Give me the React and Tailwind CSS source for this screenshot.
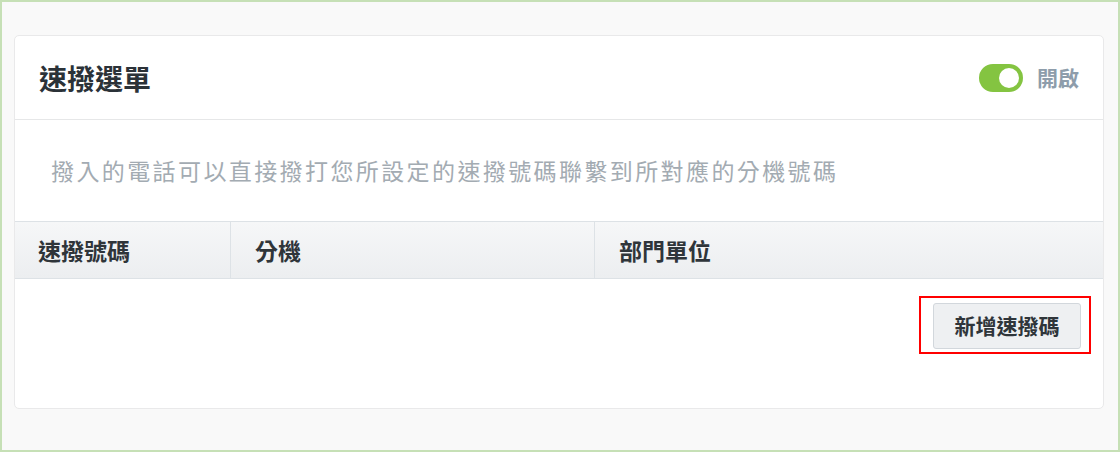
import React, { useState } from 'react';

const font = { fontFamily: '"Noto Sans CJK TC", "Noto Sans", sans-serif' };

const Toggle = ({ on, onChange }) => (
  <button
    type="button"
    onClick={() => onChange(!on)}
    className={`relative w-[44px] h-[28px] rounded-full ${on ? 'bg-[#84c441]' : 'bg-[#cfd4d8]'}`}
  >
    <span
      className={`absolute top-[4px] w-[20px] h-[20px] rounded-full bg-white ${on ? 'left-[20px]' : 'left-[4px]'}`}
    />
  </button>
);

const App = () => {
  const [enabled, setEnabled] = useState(true);

  return (
    <div
      className="w-[1120px] h-[452px] bg-[#f9f9f9] border-2 border-[#c6e0b6] pt-[33px] pl-[12px] pr-[14px]"
      style={font}
    >
      <div className="h-[374px] bg-white border border-[#e9e9ea] rounded-[5px] flex flex-col">
        <div className="h-[84px] shrink-0 flex items-center justify-between pl-[24px] pr-[24px] border-b border-[#e6e7e8]">
          <h1 className="text-[28px] font-bold text-[#2b3238]">速撥選單</h1>
          <div className="flex items-center gap-[14px]">
            <Toggle on={enabled} onChange={setEnabled} />
            <span className="text-[21px] font-bold text-[#8e9dab]">{enabled ? '開啟' : '關閉'}</span>
          </div>
        </div>

        <div className="h-[101px] shrink-0 flex items-center pl-[36px]">
          <p className="text-[23px] tracking-[2.4px] text-[#a3abb2]">
            撥入的電話可以直接撥打您所設定的速撥號碼聯繫到所對應的分機號碼
          </p>
        </div>

        <div className="h-[58px] shrink-0 flex border-y border-[#dde2e6] bg-gradient-to-b from-[#f6f7f8] to-[#eceef0] text-[23px] font-bold text-[#2f353a]">
          <div className="w-[216px] flex items-center pl-[23px] border-r border-[#dde2e6]">速撥號碼</div>
          <div className="w-[364px] flex items-center pl-[24px] border-r border-[#dde2e6]">分機</div>
          <div className="flex-1 flex items-center pl-[24px]">部門單位</div>
        </div>

        <div className="flex justify-end pt-[17px] pr-[12px]">
          <div className="border-2 border-[#ff0000] pl-[12px] pr-[8px] pt-[5px] pb-[3px]">
            <button
              type="button"
              className="w-[148px] h-[46px] rounded-[3px] bg-[#eef0f2] border border-[#d2d7dc] text-[21px] font-bold text-[#2f353a]"
            >
              新增速撥碼
            </button>
          </div>
        </div>
      </div>
    </div>
  );
};

export default App;
